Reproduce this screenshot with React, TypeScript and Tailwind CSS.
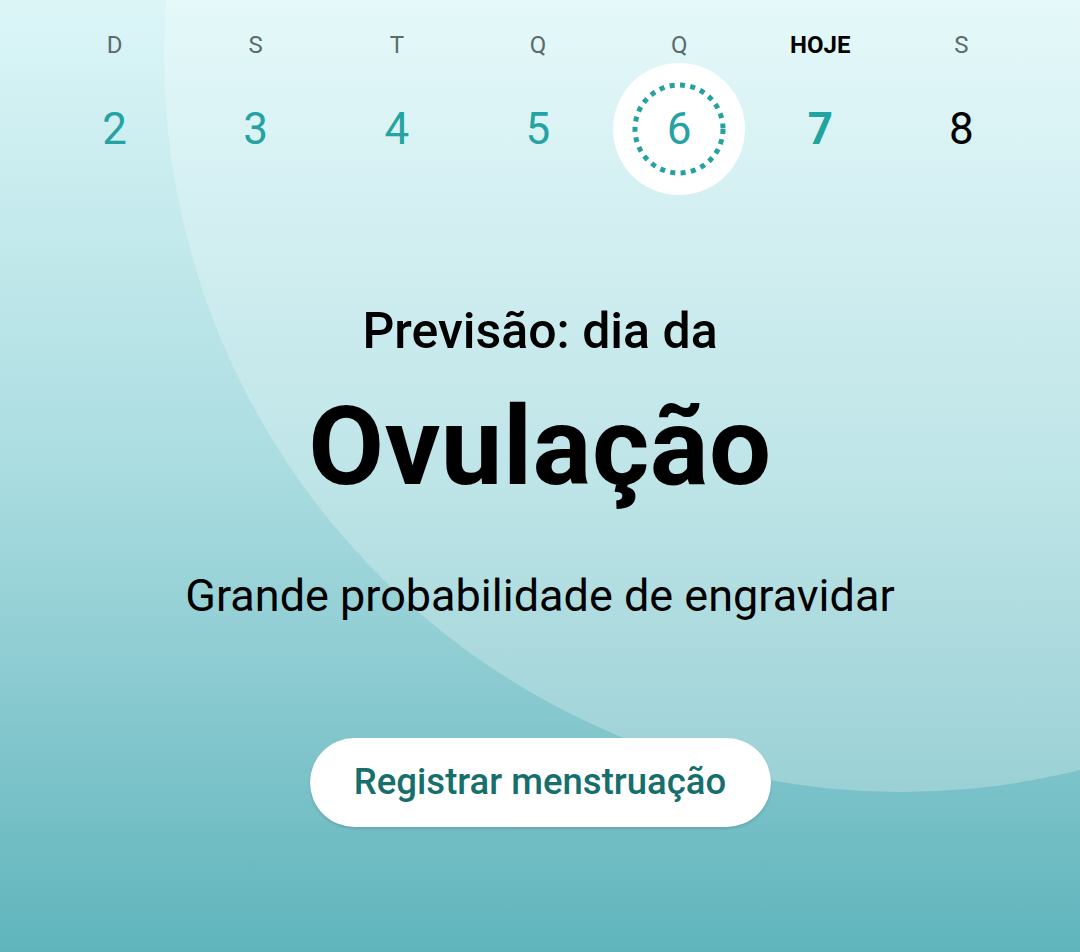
import React from "react";

const days = [
  { l: "D", n: "2" },
  { l: "S", n: "3" },
  { l: "T", n: "4" },
  { l: "Q", n: "5" },
  { l: "Q", n: "6", sel: true },
  { l: "HOJE", n: "7", today: true },
  { l: "S", n: "8", future: true },
];

export default function App() {
  return (
    <div
      className="relative w-[1080px] h-[952px] overflow-hidden bg-gradient-to-b from-[#dcf6f8] via-[#a9dce0] to-[#5fb4bc]"
      style={{ fontFamily: "Roboto, 'Noto Sans', sans-serif" }}
    >
      <div className="absolute left-[164px] top-[-682px] w-[1474px] h-[1474px] rounded-full bg-white/25" />
      <div className="relative flex flex-col items-center">
        <div className="grid grid-cols-7 w-full pl-[44px] pr-[48px] pt-[31px]">
          {days.map((d, i) => (
            <div key={i} className="flex flex-col items-center">
              <div
                className={
                  "h-[28px] leading-[28px] text-[24px] " +
                  (d.today ? "font-bold text-black" : "text-[#5d6a6c]")
                }
              >
                {d.l}
              </div>
              <div className="relative mt-[4px] w-[132px] h-[132px] flex items-center justify-center">
                {d.sel && (
                  <div className="absolute inset-0 rounded-full bg-white flex items-center justify-center">
                    <svg width="96" height="96" viewBox="0 0 96 96">
                      <circle
                        cx="48"
                        cy="48"
                        r="44"
                        fill="none"
                        stroke="#25a19f"
                        strokeWidth="5"
                        strokeDasharray="5 5.4"
                      />
                    </svg>
                  </div>
                )}
                <span
                  className={
                    "relative text-[44px] leading-none " +
                    (d.today
                      ? "font-bold text-[#21a3a0]"
                      : d.future
                      ? "text-black"
                      : "text-[#25a3a3]")
                  }
                >
                  {d.n}
                </span>
              </div>
            </div>
          ))}
        </div>
        <div className="mt-[108px] text-[50px] leading-[56px] font-medium text-black">
          Previsão: dia da
        </div>
        <div className="mt-[28px] text-[110px] leading-[120px] font-bold text-black tracking-[0.5px]">
          Ovulação
        </div>
        <div className="mt-[63px] text-[45px] leading-[52px] text-black">
          Grande probabilidade de engravidar
        </div>
        <button className="mt-[116px] w-[461px] h-[89px] rounded-full bg-white shadow-[0_2px_3px_rgba(0,0,0,0.12)] text-[36.5px] font-medium text-[#166f6d]">
          Registrar menstruação
        </button>
      </div>
    </div>
  );
}
